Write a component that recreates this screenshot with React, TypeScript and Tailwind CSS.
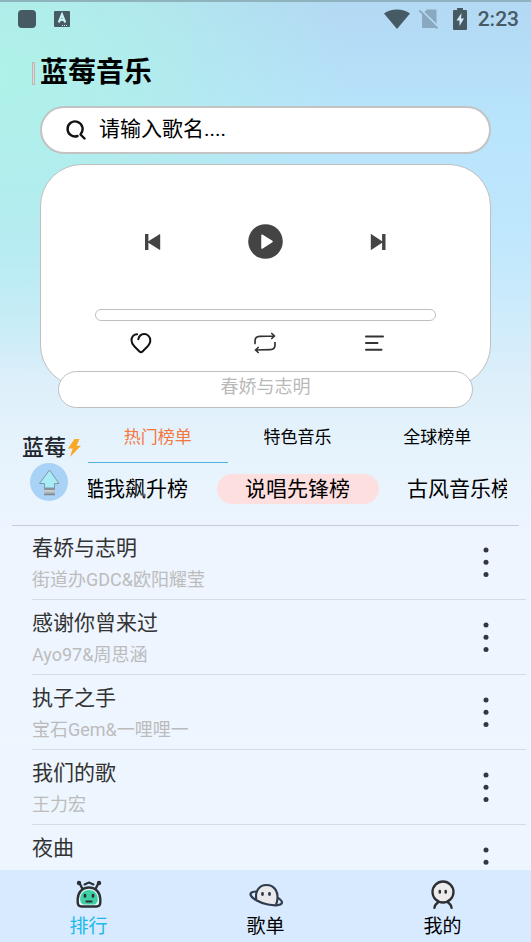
import { useState } from 'react';

const tabs = ['热门榜单', '特色音乐', '全球榜单'];

const charts = ['酷我飙升榜', '说唱先锋榜', '古风音乐榜'];

const songs = [
    { title: '春娇与志明', artist: '街道办GDC&欧阳耀莹' },
    { title: '感谢你曾来过', artist: 'Ayo97&周思涵' },
    { title: '执子之手', artist: '宝石Gem&一哩哩一' },
    { title: '我们的歌', artist: '王力宏' },
    { title: '夜曲', artist: '' },
];

function StatusBar() {
    return (
        <div className="flex h-9 shrink-0 items-center justify-between border-t-2 border-[#8fb3bd] pr-3 pl-[18px] text-[#465a64]">
            <div className="flex items-center gap-[18px]">
                <svg className="h-[18px] w-[18px]" viewBox="0 0 18 18" fill="currentColor">
                    <rect width="18" height="18" rx="4" />
                </svg>
                <svg className="h-[18px] w-4" viewBox="0 0 16 18">
                    <rect y="1" width="16" height="16" rx="1" fill="currentColor" />
                    <path d="M4.800 12.500 8 4.500l3.200 8M6 10h4" stroke="#c9f2f2" strokeWidth="2.200" fill="none" />
                    <path d="M8 15.500h6" stroke="#c9f2f2" strokeDasharray="1 1" />
                </svg>
            </div>
            <div className="flex items-center">
                <svg className="h-5 w-[26px]" viewBox="0 0 26 20" fill="currentColor">
                    <path d="M0 4.500C7-1 19-1 26 4.500L13 20Z" />
                </svg>
                <svg className="ml-[9px] h-5 w-5" viewBox="0 0 20 20">
                    <path d="M8 .5h8.500a1 1 0 0 1 1 1V18a1 1 0 0 1-1 1H4a1 1 0 0 1-1-1V5.500Z" fill="#8aa8bf" />
                    <path d="M1.500 .5 20 18.500" stroke="#b4daf4" strokeWidth="2" />
                    <path d="M.5 1.500 18.500 19.500" stroke="#8aa8bf" strokeWidth="1.800" />
                </svg>
                <svg className="ml-[14px] h-[22px] w-[14px]" viewBox="0 0 14 22">
                    <path d="M4 0h6v2h3a1 1 0 0 1 1 1v18a1 1 0 0 1-1 1H1a1 1 0 0 1-1-1V3a1 1 0 0 1 1-1h3Z" fill="currentColor" />
                    <path d="M8.500 5 3.500 12.500h3V18l4.500-7.500H8Z" fill="#d5eafa" />
                </svg>
                <span className="ml-[11px] text-[21px] leading-6 font-medium">2:23</span>
            </div>
        </div>
    );
}

function Player() {
    return (
        <section className="mx-10 mt-[10px]" aria-label="播放器">
            <div className="rounded-[42px] border border-[#bfbfbf] bg-white px-[54px] pt-[59px] pb-8">
                <div className="flex items-center justify-between px-[50px] text-[#444]">
                    <button aria-label="上一首">
                        <svg className="h-4 w-4" viewBox="0 0 16 16" fill="currentColor">
                            <path d="M0 0h3.400v7.200L14.500.2c.3-.2.7 0 .7.300v15c0 .3-.4.5-.7.300L3.400 8.800V16H0Z" />
                        </svg>
                    </button>
                    <button aria-label="播放">
                        <svg className="h-[35px] w-[35px]" viewBox="0 0 35 35">
                            <circle cx="17.5" cy="17.5" r="17.300" fill="currentColor" />
                            <path d="M14 11.200 24 17.500 14 24Z" fill="#fff" stroke="#fff" strokeWidth="1.500" strokeLinejoin="round" />
                        </svg>
                    </button>
                    <button aria-label="下一首">
                        <svg className="h-4 w-4" viewBox="0 0 16 16" fill="currentColor">
                            <path d="M15.500 0h-3.400v7.200L1.500.2C1.200 0 .8.200.8.500v15c0 .3.4.5.7.300l10.600-7V16h3.400Z" />
                        </svg>
                    </button>
                </div>
                <div
                    role="progressbar"
                    aria-label="播放进度"
                    aria-valuenow={0}
                    className="mt-[50px] h-3 rounded-[6px] border border-[#bfbfbf] bg-white"
                />
                <div className="mt-[11px] flex items-center justify-between pr-[52px] pl-[35px]">
                    <button aria-label="收藏">
                        <svg className="h-[22px] w-[22px]" viewBox="0 0 22 22" fill="none" stroke="#111" strokeWidth="2" strokeLinecap="round" strokeLinejoin="round">
                            <path d="M8.300 7.200C9 4.500 11 2.200 14 2.100c3.600-.1 6.300 2.700 6.300 6.300 0 3.200-1.700 5-3.800 7.100l-4 4c-.9.900-2.100.9-3 0l-5-5C2.600 12.600 1.500 11 1.500 8.300c0-3.600 2.400-6.100 5.600-6.100" />
                        </svg>
                    </button>
                    <button aria-label="循环播放" className="ml-[14px]">
                        <svg className="h-[22px] w-[22px]" viewBox="0 0 22 22" fill="none" stroke="#333" strokeWidth="1.700" strokeLinecap="round" strokeLinejoin="round">
                            <path d="M1 11.500V9c0-3 1.500-4.500 4.500-4.600L20 4M17.800 1.500 20.500 4l-2.700 2.500" />
                            <path d="M21 10.500V13c0 3-1.500 4.500-4.500 4.600L2 18M4.200 15.500 1.500 18l2.700 2.500" />
                        </svg>
                    </button>
                    <button aria-label="播放列表">
                        <svg className="h-[22px] w-5" viewBox="0 0 20 22" stroke="#333" strokeWidth="2" strokeLinecap="round">
                            <path d="M2 4.500h17M2 11h11.500M2 17.800h15.500" />
                        </svg>
                    </button>
                </div>
            </div>
            <div className="relative mx-[18px] -mt-4 flex h-[37px] justify-center rounded-[19px] border border-[#bfbfbf] bg-white pt-[5px]">
                <p className="text-[18px] leading-5 text-[#b9b9b9]">春娇与志明</p>
            </div>
        </section>
    );
}

function Charts() {
    const [activeTab, setActiveTab] = useState(0);
    const [activeChart, setActiveChart] = useState(1);

    return (
        <section className="mx-3 flex h-[118px] shrink-0 border-b border-[#c9cbd8] pt-[5px]">
            <div className="w-[76px] shrink-0 pt-[23px] pl-[10px]">
                <div className="flex items-center text-[#20252c]">
                    <span className="text-[22px] leading-6 font-medium">蓝莓</span>
                    <svg className="ml-px h-5 w-[15px] shrink-0" viewBox="0 0 15 20">
                        <path d="M7.500 1h5L9.500 7.800H14L3 19l2.700-8.500H1Z" fill="#f9a825" />
                    </svg>
                </div>
                <button aria-label="返回顶部" className="ml-2 mt-[3px] block">
                    <svg className="h-[38px] w-[38px]" viewBox="0 0 38 38">
                        <circle cx="19" cy="19" r="19" fill="#a9d2f7" />
                        <path d="M19.500 7 29 20.500h-4.500V25h-10v-4.500H9.500Z" fill="#a8edf5" stroke="#8297a5" />
                        <path d="M14.500 25.500h10V32h-10Z" fill="#a9b1b8" />
                        <path d="M14 26h11M14 31.500h11" stroke="#7f868e" strokeWidth="1.400" />
                        <path d="M14.500 28h10" stroke="#e2e6ea" />
                    </svg>
                </button>
            </div>
            <div className="mr-3 min-w-0 flex-1">
                <div className="grid grid-cols-3" role="tablist">
                    {tabs.map((tab, i) => (
                        <button
                            key={tab}
                            role="tab"
                            aria-selected={i === activeTab}
                            onClick={() => setActiveTab(i)}
                            className={
                                i === activeTab
                                    ? 'h-[50px] border-b border-[#50b4e2] pt-px text-[17px] text-[#f4783f]'
                                    : 'h-[50px] border-b border-transparent pt-px text-[17px] text-black'
                            }
                        >
                            {tab}
                        </button>
                    ))}
                </div>
                <div className="mt-[11px] flex justify-center overflow-hidden">
                    {charts.map((chart, i) => (
                        <button
                            key={chart}
                            onClick={() => setActiveChart(i)}
                            className={
                                i === activeChart
                                    ? 'h-[30px] w-[162px] shrink-0 rounded-full bg-[#fedfe0] text-[21px] leading-[30px]'
                                    : 'h-[30px] w-[162px] shrink-0 rounded-full text-[21px] leading-[30px]'
                            }
                        >
                            {chart}
                        </button>
                    ))}
                </div>
            </div>
        </section>
    );
}

function SongList() {
    return (
        <ul className="-mt-px min-h-0 flex-1 overflow-hidden pr-[5px] pl-8">
            {songs.map((song) => (
                <li key={song.title} className="flex h-[75px] items-center justify-between border-b border-[#d6dae6]">
                    <div className="pt-[3px]">
                        <p className="text-[21px] leading-8 text-[#333]">{song.title}</p>
                        <p className="h-8 text-[18px] leading-8 text-[#bcbcbc]">{song.artist}</p>
                    </div>
                    <button aria-label={`更多：${song.title}`} className="mr-[37px]">
                        <svg className="h-8 w-[6px]" viewBox="0 0 6 32" fill="#333840">
                            <circle cx="3" cy="4" r="2.500" />
                            <circle cx="3" cy="16.300" r="2.500" />
                            <circle cx="3" cy="28.600" r="2.500" />
                        </svg>
                    </button>
                </li>
            ))}
        </ul>
    );
}

function BottomNav() {
    return (
        <nav className="grid h-[72px] shrink-0 grid-cols-3 bg-[#d8eaff] text-[19px] leading-6 text-black">
            <button className="flex flex-col items-center pt-[9px] text-[#1cb8ea]">
                <svg className="h-8 w-8" viewBox="0 0 32 32" fill="none" stroke="#2c3036" strokeWidth="2.400" strokeLinecap="round" strokeLinejoin="round">
                    <path d="M9.500 10 6.500 4M22.500 10 25.500 4" />
                    <circle cx="6" cy="4" r="1" fill="#2c3036" />
                    <circle cx="26" cy="4" r="1" fill="#2c3036" />
                    <path d="M11.500 5.500 16 3.500l4.500 2" strokeWidth="2" />
                    <path d="M16 8.500c-7 0-11 5-11.300 11.500-.1 3-.2 4 .4 5.500.7 1.600 2 2 3.800 2h14.200c1.800 0 3.100-.4 3.800-2 .6-1.500.5-2.500.4-5.500C27 13.500 23 8.500 16 8.500Z" fill="#e3f6f5" />
                    <path d="M16 11c-5.500 0-8.800 4-8.800 9 0 3.500 1.800 5.500 4.800 5.500h8c3 0 4.800-2 4.800-5.500 0-5-3.300-9-8.800-9Z" fill="#3ecfa4" stroke="none" />
                    <path d="M12 16v1.500M20 16v1.500" strokeWidth="2.600" />
                    <path d="M13.500 22.500h5" strokeWidth="2.200" />
                </svg>
                <span className="mt-1">排行</span>
            </button>
            <button className="flex flex-col items-center pt-[9px]">
                <svg className="h-8 w-[34px]" viewBox="0 0 34 32" fill="none" stroke="#303a4c" strokeWidth="2.200" strokeLinecap="round">
                    <path d="M7.500 22C5 11.500 9.500 6 17.500 6S29.500 12 28 24.500C20 26.500 13 25.500 7.500 22Z" fill="#e9e9ec" stroke="none" />
                    <path d="M7.200 20C6 11.500 10.500 6 17.500 6c7 0 11.500 5.500 11 13.500-.1 2-.4 3.500-1.200 5.200" />
                    <path d="M6.500 12.500C3 12.800 1.300 14 1.500 15.500c.5 3.500 9 8.300 17.500 10 7.500 1.500 13.500.8 14-1.700.3-1.500-1.400-3.300-4-5" />
                    <path d="M13.500 14.500v1M20.500 14.500v1" strokeWidth="2.800" />
                </svg>
                <span className="mt-1">歌单</span>
            </button>
            <button className="flex flex-col items-center pt-[9px]">
                <svg className="h-8 w-8" viewBox="0 0 32 32" fill="none" stroke="#2d2f33" strokeWidth="2.300" strokeLinecap="round">
                    <circle cx="16" cy="13" r="10.500" fill="#ececec" />
                    <path d="M12.800 12v1.500M18.700 12v1.500" strokeWidth="2.500" />
                    <path d="M11 23.500c-2 1.200-3.300 3-3.600 5.300M21 23.500c2 1.200 3.300 3 3.600 5.300" />
                </svg>
                <span className="mt-1">我的</span>
            </button>
        </nav>
    );
}

export default function App() {
    return (
        <div className="flex h-screen flex-col overflow-hidden bg-[radial-gradient(ellipse_66%_32%_at_0%_8%,#aef2e8_0%,#b0efeacc_40%,#b8ecf400_100%),linear-gradient(180deg,#b3d8f3_0%,#b8e4fc_13%,#bfe7fd_25%,#cfecfb_34%,#deeffa_41%,#e6f3fc_48%,#eef5ff_58%,#edf6ff_100%)] font-[Roboto,'Noto_Sans_CJK_SC',sans-serif] text-black">
            <StatusBar />
            <header className="shrink-0">
                <div className="flex items-center gap-[5px] pt-[19px] pl-8">
                    <span className="h-[23px] w-[3px] border border-[#c3b3b3] bg-[#dcd8d8]" />
                    <h1 className="text-[28px] leading-9 font-bold">蓝莓音乐</h1>
                </div>
                <label className="mx-10 mt-[15px] flex h-12 items-center rounded-full border-2 border-[#c3c3c3] bg-white pl-6">
                    <svg className="h-5 w-5 shrink-0" viewBox="0 0 20 20" fill="none" stroke="#111" strokeWidth="2.400" strokeLinecap="round">
                        <path d="M15 13.500A7.500 7.500 0 1 0 11.500 16M14.500 14.500 18.500 18.500" />
                    </svg>
                    <input
                        type="text"
                        aria-label="搜索歌曲"
                        placeholder="请输入歌名...."
                        className="ml-[13px] min-w-0 flex-1 text-[21px] outline-none placeholder:text-black"
                    />
                </label>
            </header>
            <Player />
            <Charts />
            <SongList />
            <BottomNav />
        </div>
    );
}
